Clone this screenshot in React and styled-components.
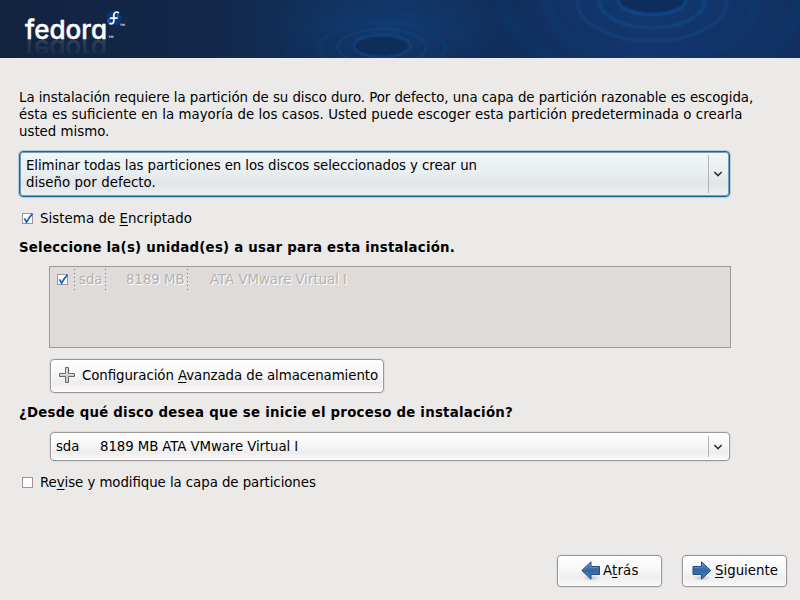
import React from "react";
import styled, { createGlobalStyle, css } from "styled-components";

const GlobalStyle = createGlobalStyle`
  body { margin: 0; overflow: hidden; background: #ebeae8; }
  * { box-sizing: border-box; }
`;

const Screen = styled.div`
  width: 800px;
  height: 600px;
  display: flex;
  flex-direction: column;
  background: #ebeae8;
  color: #000;
  font: 13.333px/17px "DejaVu Sans", sans-serif;
`;

const Banner = styled.header`
  height: 58px;
  flex: none;
  background: #122747;
  svg { display: block; }
`;

const Content = styled.main`
  flex: 1;
  display: flex;
  flex-direction: column;
  align-items: flex-start;
  padding: 31px 0 0 19px;
`;

const Intro = styled.p`
  margin: 0 0 11px;
`;

const Line = styled.span`
  display: block;
  width: max-content;
  white-space: pre;
  letter-spacing: ${(p) => p.$track || 0}px;
  font-feature-settings: "liga" 1;
`;

const surface = css`
  border: 1px solid #9c9797;
  border-radius: 4px;
  background: linear-gradient(#ffffff 0%, #f8f7f7 45%, #eeecec 72%, #fbfafa 100%);
  box-shadow: 0 0 0 1px #dfdddb, inset 0 0 0 1px rgba(255, 255, 255, 0.65);
`;

const Combo = styled.div`
  ${surface}
  display: flex;
  align-items: center;
  width: 680px;
  height: 29px;
  margin: ${(p) => p.$margin};
  padding-left: 5px;
  ${(p) =>
    p.$focused &&
    css`
      width: 711px;
      height: 46px;
      padding-left: 6px;
      border: 1px solid #1b6795;
      background: linear-gradient(#f1f6f9 0%, #e9eef0 45%, #e2e5e7 72%, #edf1f3 100%);
      box-shadow: 0 0 0 1px #b5c9d4, inset 0 0 0 1px #6f9fb9;
    `}
`;

const ComboText = styled.div`
  flex: 1;
`;

const ComboArrow = styled.div`
  align-self: stretch;
  width: 21px;
  margin: 3px 0;
  border-left: 1px solid #b4b1b1;
  display: flex;
  align-items: center;
  padding-left: 4px;
`;

const CheckRow = styled.label`
  display: flex;
  align-items: center;
  gap: 7px;
  height: 17px;
  margin-left: 3px;
`;

const Box = styled.span`
  position: relative;
  width: 11px;
  height: 11px;
  flex: none;
  border: 1px solid #a29494;
  background: #fff;
  svg { position: absolute; left: -1px; top: -2px; }
`;

const Heading = styled.h2`
  margin: ${(p) => p.$margin};
  font-size: 13.333px;
  line-height: 17px;
  font-weight: bold;
`;

const DriveList = styled.div`
  width: 682px;
  height: 82px;
  margin-left: 30px;
  border: 1px solid #a19797;
  background: #dfdbda;
`;

const DriveRow = styled.div`
  display: flex;
  align-items: center;
  height: 24px;
  padding-left: 7px;
  color: #b5b0b0;
  text-shadow: 1px 1px 0 #fff;
`;

const Cell = styled.span`
  height: 21px;
  margin-left: ${(p) => p.$gap || 0}px;
  padding: 2px 0 0 ${(p) => p.$left}px;
  width: ${(p) => p.$width}px;
  white-space: pre;
  letter-spacing: -0.03px;
  background: repeating-linear-gradient(#777 0 1px, transparent 1px 4px) 0 0 / 1px 100% no-repeat;
`;

const Button = styled.button`
  ${surface}
  display: flex;
  align-items: center;
  width: ${(p) => p.$width}px;
  height: ${(p) => p.$height}px;
  margin: ${(p) => p.$margin || 0};
  padding: 0 0 2px ${(p) => p.$left}px;
  gap: ${(p) => p.$gap || 0}px;
  color: #000;
  font: inherit;
`;

const Key = styled.span`
  text-decoration: underline;
  text-decoration-thickness: 1px;
  text-underline-offset: 2px;
  text-decoration-skip-ink: none;
`;

const Actions = styled.footer`
  display: flex;
  justify-content: flex-end;
  gap: 20px;
  padding: 0 13px 13px 0;
`;

function Check() {
  return (
    <svg width="14" height="13" viewBox="0 0 14 13">
      <path d="M2.4 6.4 4.6 10.2Q7 5.2 10.4 1.8" fill="none" stroke="#1263c5" strokeWidth="1.8" />
    </svg>
  );
}

function Chevron() {
  return (
    <svg width="10" height="8" viewBox="0 0 10 8">
      <path d="M1.3 2 5 5.6 8.7 2" fill="none" stroke="#333" strokeWidth="1.6" />
    </svg>
  );
}

function Plus() {
  return (
    <svg width="16" height="16" viewBox="0 0 16 16">
      <path d="M6.5.5h3v6h6v3h-6v6h-3v-6h-6v-3h6z" fill="#c9cbc5" stroke="#666864" />
      <path d="M7.5 1.5v6h-6M9 7.5h5.5" fill="none" stroke="#e0e1de" />
    </svg>
  );
}

function Arrow({ back }) {
  return (
    <svg width="20" height="22" viewBox="0 0 20 22">
      <defs>
        <linearGradient id="arrowFill" x1="0" y1="0" x2="0" y2="1">
          <stop offset="0" stopColor="#5686bd" />
          <stop offset=".5" stopColor="#3465a4" />
          <stop offset="1" stopColor="#4b80be" />
        </linearGradient>
        <radialGradient id="arrowShade">
          <stop offset="0" stopColor="#888" stopOpacity=".45" />
          <stop offset="1" stopColor="#888" stopOpacity="0" />
        </radialGradient>
      </defs>
      <ellipse cx="10" cy="19" rx="9" ry="3" fill="url(#arrowShade)" />
      <g transform={back ? "translate(19.5 1) scale(-1 1)" : "translate(0 1)"}>
        <path d="M1 6.5H9.5V1.8L18.7 10.5 9.5 19.2V14.5H1Z" fill="url(#arrowFill)" stroke="#234d80" />
        <path d="M2 7.5H10.5V4L17 10.3" fill="none" stroke="#79a1d0" strokeOpacity=".5" />
      </g>
    </svg>
  );
}

const Wordmark = styled.text`
  font-family: Inter, "Open Sans", sans-serif;
  font-size: 26px;
  font-weight: 500;
  font-feature-settings: "cv11" 1, "ss03" 1;
  fill: #fff;
  stroke: #fff;
  stroke-width: 0.4px;
  stroke-linejoin: round;
`;

const Trade = styled.text`
  font: bold 3px "DejaVu Sans", sans-serif;
  fill: #d5dae2;
`;

function BannerArt() {
  return (
    <svg width="800" height="58" viewBox="0 0 800 58">
      <defs>
        <linearGradient id="sea">
          <stop offset="0" stopColor="#12233f" />
          <stop offset=".27" stopColor="#12284b" />
          <stop offset=".36" stopColor="#112d56" />
          <stop offset=".48" stopColor="#113462" />
          <stop offset=".62" stopColor="#112d5a" />
          <stop offset=".8" stopColor="#123369" />
          <stop offset="1" stopColor="#113061" />
        </linearGradient>
        <radialGradient id="glow">
          <stop offset="0" stopColor="#123b70" stopOpacity=".75" />
          <stop offset="1" stopColor="#123b70" stopOpacity="0" />
        </radialGradient>
        <linearGradient id="mirrorFade" x1="0" y1="39" x2="0" y2="54" gradientUnits="userSpaceOnUse">
          <stop offset="0" stopColor="#fff" stopOpacity=".22" />
          <stop offset="1" stopColor="#fff" stopOpacity=".06" />
        </linearGradient>
        <mask id="mirrorMask" maskUnits="userSpaceOnUse" x="0" y="39" width="140" height="19">
          <rect x="0" y="39" width="140" height="14.5" fill="url(#mirrorFade)" />
        </mask>
        <filter id="soft" x="-20%" y="-20%" width="140%" height="140%">
          <feGaussianBlur stdDeviation="1.1" />
        </filter>
        <filter id="softer" x="-20%" y="-20%" width="140%" height="140%">
          <feGaussianBlur stdDeviation="4" />
        </filter>
      </defs>
      <rect width="800" height="58" fill="url(#sea)" />
      <ellipse cx="395" cy="24" rx="130" ry="45" fill="url(#glow)" />
      <ellipse cx="652" cy="0" rx="150" ry="80" fill="url(#glow)" />
      <ellipse cx="382" cy="47" rx="28" ry="11" fill="#112d58" filter="url(#soft)" />
      <ellipse cx="652" cy="0" rx="33" ry="13" fill="#112d5c" filter="url(#soft)" />
      <g fill="none" stroke="#124a8c" filter="url(#soft)">
        <ellipse cx="382" cy="46" rx="28.5" ry="11" strokeWidth="2" strokeOpacity=".85" />
        <ellipse cx="382" cy="47" rx="44" ry="18" strokeWidth="2" strokeOpacity=".5" />
        <ellipse cx="382" cy="48" rx="63" ry="25" strokeWidth="3" strokeOpacity=".3" />
        <ellipse cx="652" cy="0" rx="34" ry="14.5" strokeWidth="2.5" />
        <ellipse cx="652" cy="0" rx="53" ry="28" strokeWidth="3" strokeOpacity=".7" />
        <ellipse cx="652" cy="0" rx="75" ry="41" strokeWidth="4" strokeOpacity=".4" />
      </g>
      <g fill="none" stroke="#124380" filter="url(#softer)" strokeOpacity=".25">
        <ellipse cx="382" cy="55" rx="92" ry="39" strokeWidth="4" />
        <ellipse cx="652" cy="0" rx="104" ry="61" strokeWidth="6" />
        <ellipse cx="652" cy="0" rx="148" ry="80" strokeWidth="8" />
      </g>
      <Wordmark id="wordmark" x="25" y="38.5" textLength="82" lengthAdjust="spacingAndGlyphs">fedora</Wordmark>
      <g mask="url(#mirrorMask)" opacity=".6">
        <use href="#wordmark" transform="translate(0 78.5) scale(1 -1)" />
      </g>
      <Trade x="108.5" y="38">TM</Trade>
      <circle cx="114" cy="18" r="7.5" fill="#08377c" />
      <g fill="none" strokeWidth="1.8" strokeLinecap="round">
        <path d="M117.8 15.3a2 2 0 0 1-2.5 2.7M110.8 18.5a2.8 2.8 0 1 0 2.2 4.8" stroke="#2c67ac" />
        <path d="M118.3 12.5c-2.3-1.1-4.5.1-4.5 2.8v5.2c0 2.5-1.3 3.5-3.5 3M110.8 18.2h6" stroke="#fff" />
      </g>
      <Trade x="120" y="26">TM</Trade>
    </svg>
  );
}

export default function App() {
  return (
    <Screen>
      <GlobalStyle />
      <Banner><BannerArt /></Banner>
      <Content>
        <Intro>
          <Line $track={-0.047}>La instalación requiere la partición de su disco duro. Por defecto, una capa de partición razonable es escogida,</Line>
          <Line $track={0.047}>ésta es suficiente en la mayoría de los casos. Usted puede escoger esta partición predeterminada o crearla</Line>
          <Line>usted mismo.</Line>
        </Intro>
        <Combo $focused $margin="0 0 13px">
          <ComboText>
            <Line $track={-0.08}>Eliminar todas las particiones en los discos seleccionados y crear un</Line>
            <Line $track={0.06}>diseño por defecto.</Line>
          </ComboText>
          <ComboArrow><Chevron /></ComboArrow>
        </Combo>
        <CheckRow>
          <Box><Check /></Box>
          <Line $track={0.06}>Sistema de <Key>E</Key>ncriptado</Line>
        </CheckRow>
        <Heading $margin="12px 0 10px"><Line $track={0.235}>Seleccione la(s) unidad(es) a usar para esta instalación.</Line></Heading>
        <DriveList>
          <DriveRow>
            <Box><Check /></Box>
            <Cell $gap={6} $left={5} $width={31}>sda</Cell>
            <Cell $left={21} $width={82}>8189 MB</Cell>
            <Cell $left={23} $width={200}>ATA VMware Virtual I</Cell>
          </DriveRow>
        </DriveList>
        <Button $width={334} $height={34} $left={8} $gap={7} $margin="11px 0 0 31px">
          <Plus />
          <Line $track={-0.06}>Configuración <Key>A</Key>vanzada de almacenamiento</Line>
        </Button>
        <Heading $margin="11px 0 11px"><Line $track={0.24}>¿Desde qué disco desea que se inicie el proceso de instalación?</Line></Heading>
        <Combo $margin="0 0 13px 31px">
          <ComboText><Line $track={-0.09}>sda     8189 MB ATA VMware Virtual I</Line></ComboText>
          <ComboArrow><Chevron /></ComboArrow>
        </Combo>
        <CheckRow>
          <Box />
          <Line $track={-0.06}>Re<Key>v</Key>ise y modifique la capa de particiones</Line>
        </CheckRow>
      </Content>
      <Actions>
        <Button $width={105} $height={32} $left={23} $gap={2}><Arrow back /><Line $track={0.15}>A<Key>t</Key>rás</Line></Button>
        <Button $width={105} $height={32} $left={9} $gap={3}><Arrow /><Line><Key>S</Key>iguiente</Line></Button>
      </Actions>
    </Screen>
  );
}
